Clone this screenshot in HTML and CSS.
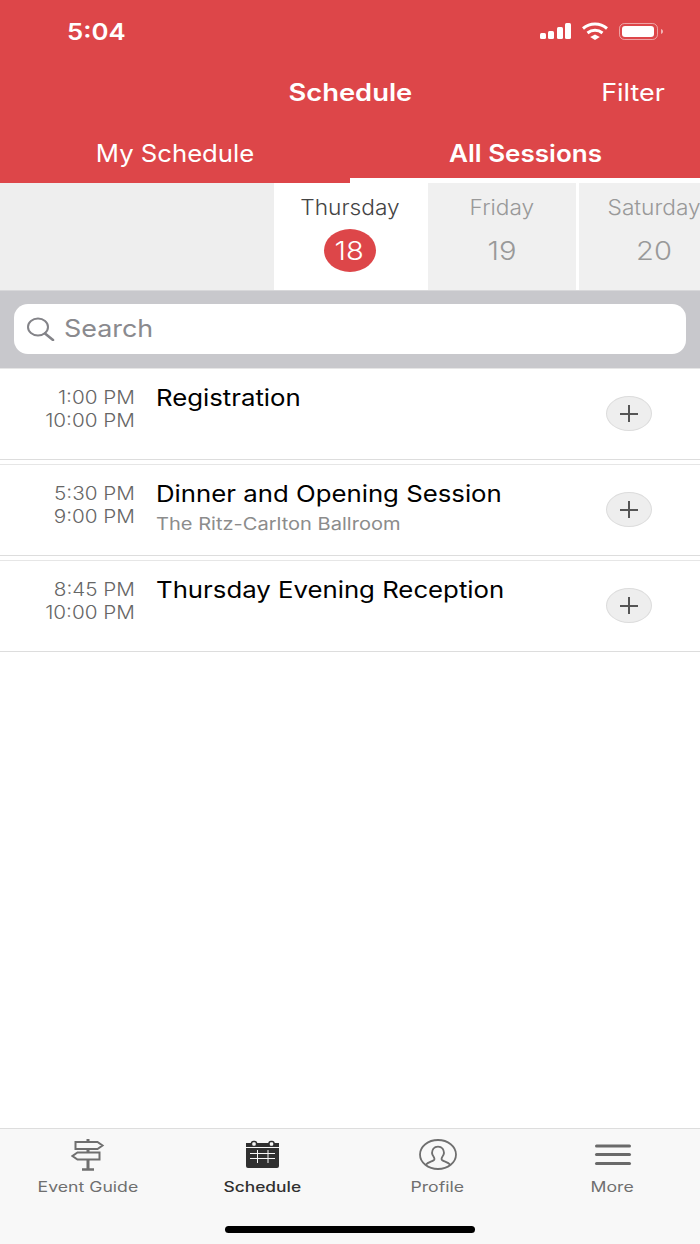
FILE: index.html
```html
<!DOCTYPE html>
<html lang="en">
<head>
    <meta charset="UTF-8">
    <meta name="viewport" content="width=device-width, initial-scale=1.0">
    <title>Schedule</title>
    <link rel="stylesheet" href="styles.css">
</head>
<body>
    <div class="app">
        <div class="header">
            <div class="status-bar">
                <span class="clock wide">5:04</span>
                <svg class="status-icons" width="130" height="24" viewBox="534 20 130 24">
                    <g fill="#fff">
                        <rect x="540" y="33" width="6" height="6" rx="1.5"/>
                        <rect x="548" y="31" width="6" height="8" rx="1.5"/>
                        <rect x="557" y="27" width="6" height="12" rx="1.5"/>
                        <rect x="565" y="23" width="6" height="16" rx="1.5"/>
                        <path d="M595 34.5l4.8 2.6-4.8 3-4.8-3z"/>
                        <rect x="622" y="26" width="32" height="11" rx="3"/>
                        <path d="M661 29c1.5.5 2 1.2 2 2.5s-.5 2-2 2.5z" opacity=".6"/>
                    </g>
                    <g fill="none" stroke="#fff" stroke-width="3">
                        <path d="M583 28.5c7-6 17-6 24 0"/>
                        <path d="M587.500 33c4.500-3.600 10.500-3.600 15 0"/>
                    </g>
                    <rect x="619.500" y="23.500" width="38" height="16" rx="5" fill="none" stroke="#fff" stroke-opacity=".5"/>
                </svg>
            </div>
            <div class="title-row">
                <span class="title wide">Schedule</span>
                <span class="filter wide">Filter</span>
            </div>
            <div class="tabs">
                <div class="tab"><span class="wide">My Schedule</span></div>
                <div class="tab tab-active"><span class="wide">All Sessions</span></div>
            </div>
        </div>

        <div class="days">
            <div class="days-spacer"></div>
            <div class="day day-current">
                <span class="day-name wide">Thursday</span>
                <span class="day-badge"><span class="wide">18</span></span>
            </div>
            <div class="day">
                <span class="day-name wide">Friday</span>
                <span class="day-num"><span class="wide">19</span></span>
            </div>
            <div class="day">
                <span class="day-name wide">Saturday</span>
                <span class="day-num"><span class="wide">20</span></span>
            </div>
        </div>

        <div class="search-band">
            <div class="search-field">
                <svg class="search-icon" width="28" height="24" viewBox="0 0 28 24">
                    <ellipse cx="11" cy="10" rx="10" ry="8.500" fill="none" stroke="#838388" stroke-width="2"/>
                    <path d="M18 16.500l8 6.500" stroke="#838388" stroke-width="2.600" stroke-linecap="round"/>
                </svg>
                <span class="search-text wide">Search</span>
            </div>
        </div>

        <div class="session">
            <div class="times">
                <span class="wide-r">1:00 PM</span>
                <span class="wide-r">10:00 PM</span>
            </div>
            <div class="info">
                <span class="session-name wide">Registration</span>
            </div>
            <div class="add"><span class="add-v"></span></div>
        </div>
        <div class="session">
            <div class="times">
                <span class="wide-r">5:30 PM</span>
                <span class="wide-r">9:00 PM</span>
            </div>
            <div class="info">
                <span class="session-name wide">Dinner and Opening Session</span>
                <span class="session-place wide">The Ritz-Carlton Ballroom</span>
            </div>
            <div class="add"><span class="add-v"></span></div>
        </div>
        <div class="session">
            <div class="times">
                <span class="wide-r">8:45 PM</span>
                <span class="wide-r">10:00 PM</span>
            </div>
            <div class="info">
                <span class="session-name wide">Thursday Evening Reception</span>
            </div>
            <div class="add"><span class="add-v"></span></div>
        </div>

        <div class="filler"></div>

        <div class="tabbar">
            <div class="tabbar-items">
                <div class="tabbar-item">
                    <svg width="34" height="33" viewBox="71 1138 34 33" fill="none" stroke="#6f6f6f" stroke-width="2">
                        <path d="M75.500 1142h22l5 3.500-5 3.500h-22z"/>
                        <path d="M99.500 1152.500h-22l-5 3.500 5 3.500h22z"/>
                        <path d="M88 1139v3M88 1149v3.500M88 1159.500v10" stroke-width="3"/>
                        <path d="M82 1169.500h12" stroke-width="2.500"/>
                    </svg>
                    <span class="tabbar-label wide">Event Guide</span>
                </div>
                <div class="tabbar-item tabbar-current">
                    <svg width="34" height="33" viewBox="246 1138 34 33">
                        <path d="M246 1143h33v23a2 2 0 0 1-2 2h-29a2 2 0 0 1-2-2z" fill="#303030"/>
                        <rect x="251.500" y="1141.500" width="5" height="5" rx="2" fill="#f8f8f8" stroke="#303030" stroke-width="1.500"/>
                        <rect x="269" y="1141.500" width="5" height="5" rx="2" fill="#f8f8f8" stroke="#303030" stroke-width="1.500"/>
                        <path d="M246 1147.500h33M250 1153.500h25M250 1158.500h25M257.500 1150v13M268 1150v13" stroke="#f8f8f8" fill="none"/>
                    </svg>
                    <span class="tabbar-label wide">Schedule</span>
                </div>
                <div class="tabbar-item">
                    <svg width="38" height="33" viewBox="418 1138 38 33" fill="none" stroke="#6f6f6f" stroke-width="1.800">
                        <ellipse cx="437" cy="1154.500" rx="18" ry="14.500"/>
                        <path d="M424.500 1165c3-3.500 6-3 8.500-5 1-1 .5-2-.5-3.500-2-2.500-2-5 0-8 2-2.500 7-2.500 9 0 2 3 2 5.500 0 8-1 1.500-1.500 2.500-.5 3.500 2.500 2 5.500 1.500 8.500 5"/>
                    </svg>
                    <span class="tabbar-label wide">Profile</span>
                </div>
                <div class="tabbar-item">
                    <svg width="38" height="33" viewBox="593 1138 38 33" fill="#6a6a6a">
                        <rect x="594" y="1144.500" width="36" height="3" rx="1.500"/>
                        <rect x="594" y="1153" width="36" height="3" rx="1.500"/>
                        <rect x="594" y="1162" width="36" height="3" rx="1.500"/>
                    </svg>
                    <span class="tabbar-label wide">More</span>
                </div>
            </div>
            <div class="home-bar"></div>
        </div>
    </div>
</body>
</html>
```

FILE: styles.css
```css
* {
    box-sizing: border-box;
}
body {
    margin: 0;
    font-family: Inter, "Liberation Sans", sans-serif;
}
.wide {
    display: inline-block;
    transform: scaleX(1.12);
}
.wide-r {
    display: block;
    transform: scaleX(1.15);
    transform-origin: right center;
}
.app {
    width: 700px;
    height: 1244px;
    display: flex;
    flex-direction: column;
    overflow: hidden;
    background-color: #fff;
}

/* red header */
.header {
    height: 183px;
    background-color: #dd4649;
    color: #fff;
}
.status-bar {
    height: 62px;
    display: flex;
    justify-content: space-between;
    align-items: flex-start;
    padding: 20px 36px 0 67px;
}
.clock {
    margin-top: 1px;
    font-size: 23px;
    line-height: 23px;
    font-weight: 600;
    transform-origin: left center;
}
.title-row {
    height: 60px;
    display: flex;
    justify-content: center;
    align-items: center;
    position: relative;
}
.title {
    font-size: 24px;
    font-weight: 600;
    transform: scaleX(1.14);
}
.filter {
    position: absolute;
    right: 35px;
    font-size: 24px;
    transform-origin: right center;
}
.tabs {
    height: 61px;
    display: flex;
}
.tab {
    flex: 1;
    height: 61px;
    padding-top: 18px;
    text-align: center;
    font-size: 24px;
    line-height: 28px;
}
.tab .wide {
    transform: scaleX(1.07);
}
.tab-active {
    font-weight: 600;
    height: 56px;
    box-shadow: 0 5px 0 #fff;
}
.tab-active .wide {
    transform: scaleX(1.085);
}

/* day picker */
.days {
    height: 107px;
    display: flex;
    gap: 3px;
    background-color: #fff;
}
.days-spacer {
    width: 274px;
    flex: none;
    background-color: #eee;
    margin-right: -3px;
}
.day {
    width: 148px;
    flex: none;
    background-color: #f0f0f0;
    color: #999;
    display: flex;
    flex-direction: column;
    align-items: center;
    padding-top: 12px;
}
.day:last-child {
    padding-left: 2px;
}
.day-current {
    width: 154px;
    padding-right: 3px;
    margin-right: -3px;
    background-color: #fff;
    color: #444;
}
.day-name {
    font-size: 21px;
    line-height: 26px;
    font-weight: 300;
    transform: scaleX(1.08);
}
.day-badge,
.day-num {
    width: 52px;
    height: 43px;
    margin-top: 8px;
    display: flex;
    align-items: center;
    justify-content: center;
    font-size: 26px;
    font-weight: 300;
}
.day-badge {
    border-radius: 50%;
    background-color: #dd4649;
    color: #fff;
}

/* search */
.search-band {
    height: 78px;
    padding: 14px;
    background-color: #c8c8cc;
    border-top: 1px solid #d8d8da;
}
.search-field {
    height: 50px;
    margin-top: -1px;
    display: flex;
    align-items: center;
    padding-left: 13px;
    gap: 9px;
    border-radius: 14px;
    background-color: #fff;
}
.search-text {
    margin-top: -1px;
    font-size: 24px;
    color: #8a8a8e;
    transform-origin: left center;
}

/* sessions */
.session {
    height: 92px;
    margin-bottom: 4px;
    display: flex;
    border-top: 1px solid #e6e6e6;
    border-bottom: 1px solid #ddd;
}
.times {
    width: 135px;
    flex: none;
    padding-top: 18px;
    font-size: 18px;
    line-height: 22.500px;
    font-weight: 300;
    color: #666;
    text-align: right;
}
.info {
    flex: 1;
    padding: 14px 0 0 21px;
    display: flex;
    flex-direction: column;
    align-items: flex-start;
}
.session-name {
    font-size: 23px;
    line-height: 30px;
    color: #000;
    transform-origin: left center;
}
.session-place {
    margin-top: 3px;
    font-size: 17px;
    line-height: 24px;
    color: #8c8c8c;
    transform: scaleX(1.18);
    transform-origin: left center;
}
.add {
    width: 46px;
    height: 35px;
    margin: 27px 48px 0 0;
    flex: none;
    position: relative;
    border-radius: 50%;
    border: 1px solid #dcdcdc;
    background-color: #eee;
}
.add::before {
    content: "";
    position: absolute;
    left: 13px;
    right: 13px;
    top: 15.500px;
    height: 2px;
    background-color: #555;
}
.add-v {
    position: absolute;
    left: 21px;
    top: 8px;
    width: 2px;
    height: 17px;
    background-color: #555;
}
.filler {
    flex: 1;
}

/* bottom tab bar */
.tabbar {
    height: 116px;
    background-color: #f8f8f8;
    border-top: 1px solid #ddd;
}
.tabbar-items {
    height: 97px;
    display: flex;
}
.tabbar-item {
    flex: 1;
    display: flex;
    flex-direction: column;
    align-items: center;
    padding-top: 9px;
    color: #6f6f6f;
}
.tabbar-current {
    color: #303030;
}
.tabbar-label {
    margin-top: 7px;
    font-size: 14px;
    line-height: 18px;
    font-weight: 400;
    transform: scaleX(1.26);
}
.tabbar-current .tabbar-label {
    font-weight: 500;
    transform: scaleX(1.24);
}
.home-bar {
    width: 250px;
    height: 7px;
    margin: 0 auto;
    border-radius: 4px;
    background-color: #000;
}
```
